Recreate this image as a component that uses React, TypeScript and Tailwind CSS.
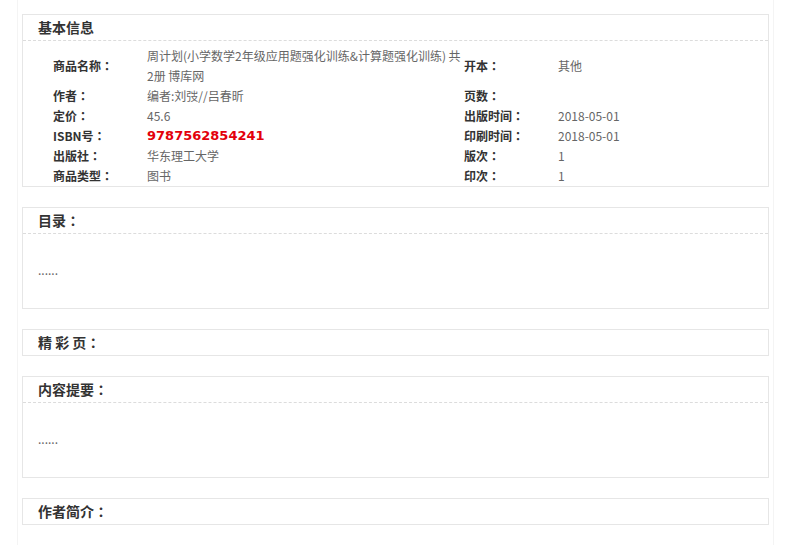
import React from "react";

const font = { fontFamily: '"Noto Sans CJK SC", "Liberation Sans", sans-serif' };
const tc = { fontFamily: '"Noto Sans CJK TC", "Noto Sans CJK JP", sans-serif' };

function withColon(text: string) {
  if (text.endsWith("：")) {
    return (
      <>
        {text.slice(0, -1)}
        <span style={tc}>：</span>
      </>
    );
  }
  return text;
}

function Label({ children }: { children: string }) {
  return <div className="flex items-center font-bold text-[12px] text-[#333] whitespace-nowrap">{withColon(children)}</div>;
}
function Value({ children }: { children: React.ReactNode }) {
  return <div className="flex items-center text-[12px] text-[#666] whitespace-nowrap">{children}</div>;
}

function Box({ title, children }: { title: string; children?: React.ReactNode }) {
  return (
    <div className="border border-[#e6e6e6] bg-white">
      <div
        className={
          "h-[25px] pl-[15px] flex items-center font-bold text-[14px] text-[#333] leading-[25px] box-content " +
          (children ? "border-b border-dashed border-[#dcdcdc]" : "")
        }
      >
        {withColon(title)}
      </div>
      {children}
    </div>
  );
}

export default function App() {
  return (
    <div className="bg-white min-h-[545px]" style={font}>
      <div className="ml-[17px] w-[757px] border-x border-[#f4f4f4] px-[4px] pt-[14px] pb-[21px]">
        <Box title="基本信息">
          <div className="h-[145px] pt-[5px] pl-[30px]">
            <div className="grid grid-cols-[94px_317px_94px_1fr] grid-rows-[40px_20px_20px_20px_20px_20px] leading-[20px]">
              <Label>商品名称：</Label>
              <div className="flex flex-col justify-center text-[12px] text-[#666] whitespace-nowrap">
                <span>周计划(小学数学2年级应用题强化训练&amp;计算题强化训练) 共</span>
                <span>2册 博库网</span>
              </div>
              <Label>开本：</Label>
              <Value>其他</Value>

              <Label>作者：</Label>
              <Value>编者:刘弢//吕春昕</Value>
              <Label>页数：</Label>
              <Value>{""}</Value>

              <Label>定价：</Label>
              <Value>45.6</Value>
              <Label>出版时间：</Label>
              <Value>2018-05-01</Value>

              <Label>ISBN号：</Label>
              <div className="flex items-center">
                <span
                  className="font-bold text-[13px] text-[#e3000b]"
                  style={{ fontFamily: '"DejaVu Sans", Verdana, sans-serif' }}
                >
                  9787562854241
                </span>
              </div>
              <Label>印刷时间：</Label>
              <Value>2018-05-01</Value>

              <Label>出版社：</Label>
              <Value>华东理工大学</Value>
              <Label>版次：</Label>
              <Value>1</Value>

              <Label>商品类型：</Label>
              <Value>图书</Value>
              <Label>印次：</Label>
              <Value>1</Value>
            </div>
          </div>
        </Box>

        <div className="mt-[20px]">
          <Box title="目录：">
            <div className="h-[74px] pt-[26px] pl-[15px] text-[12px] text-[#666] leading-[20px]">......</div>
          </Box>
        </div>

        <div className="mt-[20px]">
          <Box title="精 彩 页：" />
        </div>

        <div className="mt-[20px]">
          <Box title="内容提要：">
            <div className="h-[74px] pt-[26px] pl-[15px] text-[12px] text-[#666] leading-[20px]">......</div>
          </Box>
        </div>

        <div className="mt-[20px]">
          <Box title="作者简介：" />
        </div>
      </div>
    </div>
  );
}
